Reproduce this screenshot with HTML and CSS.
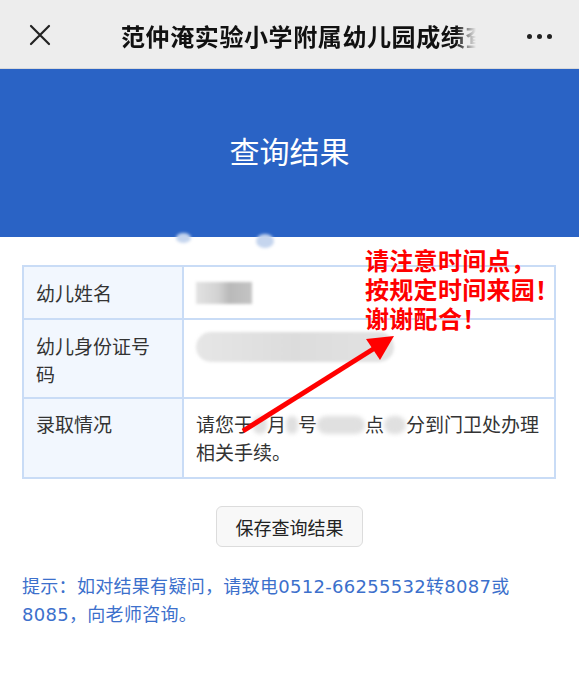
FILE: index.html
```html
<!DOCTYPE html>
<html lang="zh-CN">
<head>
<meta charset="utf-8">
<title>查询结果</title>
<link rel="stylesheet" href="styles.css">
</head>
<body>
<header class="topbar">
  <div class="close">
    <svg width="22" height="22" viewBox="0 0 22 22"><path d="M2 2 L20 20 M20 2 L2 20" stroke="#222" stroke-width="2.2" fill="none" stroke-linecap="round"/></svg>
  </div>
  <div class="title">范仲淹实验小学附属幼儿园成绩查询</div>
  <div class="more"><span></span><span></span><span></span></div>
</header>
<main class="page">
  <section class="banner">查询结果</section>
  <span class="smudge smudge-a"></span>
  <span class="smudge smudge-b"></span>
  <table class="result">
    <tr class="r1">
      <th>幼儿姓名</th>
      <td><span class="mask mask-name"></span></td>
    </tr>
    <tr class="r2">
      <th>幼儿身份证号码</th>
      <td><span class="mask mask-id"></span></td>
    </tr>
    <tr class="r3">
      <th>录取情况</th>
      <td>请您于<span class="blob b1"></span>月<span class="blob b2"></span>号<span class="blob b3"></span>点<span class="blob b4"></span>分到门卫处办理<br>相关手续。</td>
    </tr>
  </table>
  <div class="actions"><button class="save">保存查询结果</button></div>
  <p class="tip">提示：如对结果有疑问，请致电0512-66255532转8087或8085，向老师咨询。</p>
  <div class="note">请注意时间点，<br>按规定时间来园！<br>谢谢配合！</div>
  <svg class="arrow" width="579" height="683" viewBox="0 0 579 683">
    <line x1="243" y1="431" x2="378" y2="346" stroke="#ff0000" stroke-width="5"/>
    <polygon points="394,336 366,339 380,360" fill="#ff0000"/>
  </svg>
</main>
</body>
</html>
```
FILE: styles.css
```css
* { box-sizing: border-box; }
html, body { margin: 0; padding: 0; }
body {
  width: 579px;
  height: 683px;
  overflow: hidden;
  background: #ffffff;
  font-family: "Noto Sans CJK SC", "Noto Sans", sans-serif;
  color: #333;
}
.topbar {
  display: grid;
  grid-template-columns: 121px 355px 1fr;
  align-items: center;
  height: 69px;
  background: #ededed;
  border-bottom: 1px solid #d9d9d9;
}
.close { padding-left: 29px; display: flex; align-items: center; padding-top: 2px; }
.title {
  font-size: 24px;
  font-weight: 700;
  color: #111;
  letter-spacing: 0.6px;
  white-space: nowrap;
  overflow: hidden;
  padding-top: 2px;
  -webkit-mask-image: linear-gradient(to right, #000 0, #000 335px, transparent 355px);
  mask-image: linear-gradient(to right, #000 0, #000 335px, transparent 355px);
}
.more {
  display: flex;
  justify-content: flex-end;
  gap: 5px;
  padding-right: 27px;
  padding-top: 4px;
}
.more span { width: 5px; height: 5px; border-radius: 50%; background: #222; }
.page { position: relative; }
.banner {
  height: 168px;
  background: #2a63c5;
  color: #fff;
  font-size: 30px;
  display: flex;
  align-items: center;
  justify-content: center;
  padding-bottom: 6px;
}
.smudge {
  position: absolute;
  border-radius: 50%;
  background: #c5d5ee;
  filter: blur(1.5px);
}
.smudge-a { left: 176px; top: 164px; width: 15px; height: 10px; }
.smudge-b { left: 256px; top: 165px; width: 18px; height: 14px; }
.result {
  margin: 28px 0 0 22px;
  width: 534px;
  border-collapse: collapse;
  font-size: 19px;
  line-height: 28px;
}
.result th, .result td {
  border: 2px solid #c9dcf6;
  vertical-align: top;
  text-align: left;
  font-weight: 400;
  padding: 12px 12px 0 12px;
}
.result th { width: 160px; padding-right: 22px; background: #f2f7fe; color: #333; }
.result td { color: #333; }
.r1 { height: 53px; }
.r2 { height: 79px; }
.r3 { height: 80px; }
.r3 th, .r3 td { padding-top: 11px; }
.mask { display: inline-block; vertical-align: top; filter: blur(1.5px); }
.mask-name {
  width: 56px; height: 22px; margin-top: 3px;
  background: linear-gradient(to right, #e2e2e2 0, #d2d2d2 40%, #b9b9b9 60%, #c4c4c4 100%);
}
.mask-id {
  width: 198px; height: 30px; border-radius: 15px; margin-top: 0;
  background: linear-gradient(to right, #e6e6e6, #dcdcdc 50%, #e2e2e2);
}
.blob {
  display: inline-block;
  height: 18px;
  border-radius: 9px;
  background: #e0e0e0;
  filter: blur(2px);
  vertical-align: -2px;
}
.b1 { width: 14px; }
.b2 { width: 12px; }
.b3 { width: 48px; }
.b4 { width: 22px; }
.actions { display: flex; justify-content: center; margin-top: 27px; }
.save {
  width: 147px;
  height: 41px;
  border: 1px solid #dcdcdc;
  border-radius: 6px;
  background: #f8f8f8;
  font-family: inherit;
  font-size: 18px;
  color: #222;
  padding: 0;
}
.tip {
  margin: 26px 0 0;
  padding: 0 30px 0 22px;
  font-family: "DejaVu Sans", "Noto Sans CJK SC", sans-serif;
  font-size: 18px;
  line-height: 28px;
  letter-spacing: 0.3px;
  color: #3c70cc;
}
.note {
  position: absolute;
  left: 365px;
  top: 176px;
  font-size: 24px;
  line-height: 29px;
  letter-spacing: 0.3px;
  font-weight: 700;
  color: #ff0000;
}
.arrow {
  position: absolute;
  left: 0;
  top: -69px;
  pointer-events: none;
}
```
